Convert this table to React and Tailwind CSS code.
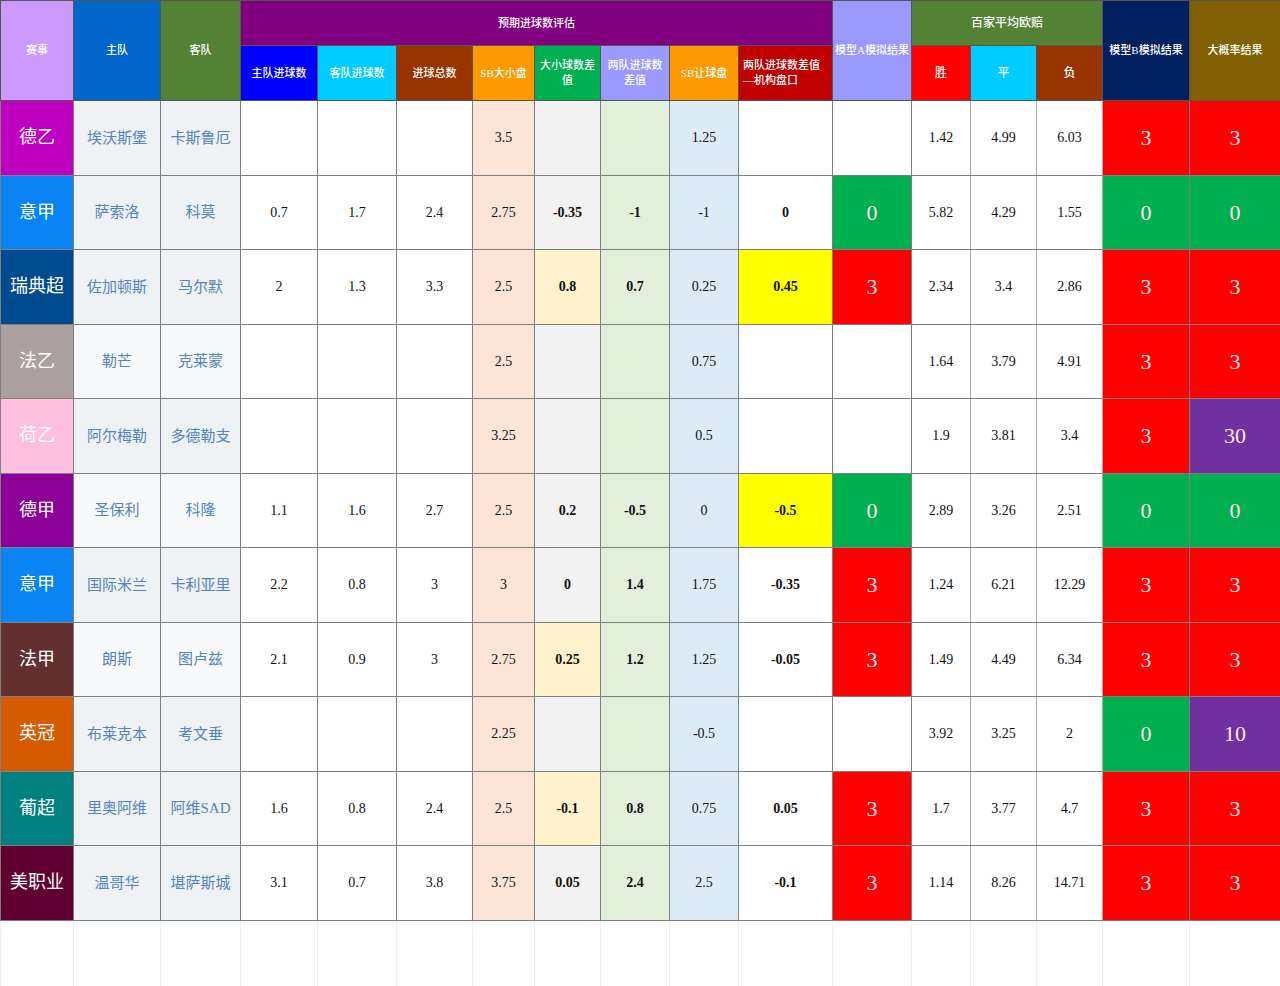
import React from 'react'

const COLS = [73, 87, 80, 77, 79, 76, 62, 66, 69, 69, 94, 79, 59, 66, 66, 87, 91]

const ROWS = [
  { lg: '德乙', lgBg: 'bg-[#c000c0]', home: '埃沃斯堡', away: '卡斯鲁厄', hg: '', ag: '', tot: '', ou: '3.5', ouD: '', gd: '', ah: '1.25', ahD: '', a: '', w: '1.42', d: '4.99', l: '6.03', b: '3', big: '3' },
  { lg: '意甲', lgBg: 'bg-[#0a84f5]', home: '萨索洛', away: '科莫', hg: '0.7', ag: '1.7', tot: '2.4', ou: '2.75', ouD: '-0.35', gd: '-1', ah: '-1', ahD: '0', a: '0', w: '5.82', d: '4.29', l: '1.55', b: '0', big: '0' },
  { lg: '瑞典超', lgBg: 'bg-[#004a8f]', home: '佐加顿斯', away: '马尔默', hg: '2', ag: '1.3', tot: '3.3', ou: '2.5', ouD: '0.8', ouY: true, gd: '0.7', ah: '0.25', ahD: '0.45', ahY: true, a: '3', w: '2.34', d: '3.4', l: '2.86', b: '3', big: '3' },
  { lg: '法乙', lgBg: 'bg-[#aaa09f]', light: true, home: '勒芒', away: '克莱蒙', hg: '', ag: '', tot: '', ou: '2.5', ouD: '', gd: '', ah: '0.75', ahD: '', a: '', w: '1.64', d: '3.79', l: '4.91', b: '3', big: '3' },
  { lg: '荷乙', lgBg: 'bg-[#ffbfdf]', home: '阿尔梅勒', away: '多德勒支', hg: '', ag: '', tot: '', ou: '3.25', ouD: '', gd: '', ah: '0.5', ahD: '', a: '', w: '1.9', d: '3.81', l: '3.4', b: '3', big: '30' },
  { lg: '德甲', lgBg: 'bg-[#8b0096]', light: true, home: '圣保利', away: '科隆', hg: '1.1', ag: '1.6', tot: '2.7', ou: '2.5', ouD: '0.2', gd: '-0.5', ah: '0', ahD: '-0.5', ahY: true, a: '0', w: '2.89', d: '3.26', l: '2.51', b: '0', big: '0' },
  { lg: '意甲', lgBg: 'bg-[#0a84f5]', home: '国际米兰', away: '卡利亚里', hg: '2.2', ag: '0.8', tot: '3', ou: '3', ouD: '0', gd: '1.4', ah: '1.75', ahD: '-0.35', a: '3', w: '1.24', d: '6.21', l: '12.29', b: '3', big: '3' },
  { lg: '法甲', lgBg: 'bg-[#632f2f]', light: true, home: '朗斯', away: '图卢兹', hg: '2.1', ag: '0.9', tot: '3', ou: '2.75', ouD: '0.25', ouY: true, gd: '1.2', ah: '1.25', ahD: '-0.05', a: '3', w: '1.49', d: '4.49', l: '6.34', b: '3', big: '3' },
  { lg: '英冠', lgBg: 'bg-[#d65a00]', home: '布莱克本', away: '考文垂', hg: '', ag: '', tot: '', ou: '2.25', ouD: '', gd: '', ah: '-0.5', ahD: '', a: '', w: '3.92', d: '3.25', l: '2', b: '0', big: '10' },
  { lg: '葡超', lgBg: 'bg-[#008080]', home: '里奥阿维', away: '阿维SAD', hg: '1.6', ag: '0.8', tot: '2.4', ou: '2.5', ouD: '-0.1', ouY: true, gd: '0.8', ah: '0.75', ahD: '0.05', a: '3', w: '1.7', d: '3.77', l: '4.7', b: '3', big: '3' },
  { lg: '美职业', lgBg: 'bg-[#600030]', home: '温哥华', away: '堪萨斯城', hg: '3.1', ag: '0.7', tot: '3.8', ou: '3.75', ouD: '0.05', gd: '2.4', ah: '2.5', ahD: '-0.1', a: '3', w: '1.14', d: '8.26', l: '14.71', b: '3', big: '3' },
]

function resultBg(v) {
  if (v === '3') return 'bg-[#ff0000]'
  if (v === '0') return 'bg-[#00b050]'
  if (v === '') return 'bg-white'
  return 'bg-[#7030a0]'
}

const th = 'border border-[#555] text-white font-medium text-[11px] leading-[15px] text-center align-middle px-0.5'
const td = 'border border-[#7f7f7f] text-center align-middle'
const num = `${td} text-[14px] text-[#111]`
const res = `${td} text-[22px] text-[#ffe8ee]`

export default function App() {
  return (
    <div className="w-[1280px] h-[986px] bg-white overflow-hidden" style={{ fontFamily: '"Liberation Serif", "Noto Sans CJK SC", serif' }}>
      <table className="table-fixed border-collapse w-[1280px]">
        <colgroup>
          {COLS.map((w, i) => <col key={i} style={{ width: w }} />)}
        </colgroup>
        <thead>
          <tr className="h-[45px]">
            <th rowSpan={2} className={`${th} bg-[#cc99ff]`}>赛事</th>
            <th rowSpan={2} className={`${th} bg-[#0066cc]`}>主队</th>
            <th rowSpan={2} className={`${th} bg-[#548235]`}>客队</th>
            <th colSpan={8} className={`${th} bg-[#800080]`}>预期进球数评估</th>
            <th rowSpan={2} className={`${th} bg-[#9999ff]`}>模型A模拟结果</th>
            <th colSpan={3} className={`${th} bg-[#548235] text-[12px]`}>百家平均欧赔</th>
            <th rowSpan={2} className={`${th} bg-[#002060]`}>模型B模拟结果</th>
            <th rowSpan={2} className={`${th} bg-[#806000]`}>大概率结果</th>
          </tr>
          <tr className="h-[55px]">
            <th className={`${th} bg-[#0000ff]`}>主队进球数</th>
            <th className={`${th} bg-[#00ccff]`}>客队进球数</th>
            <th className={`${th} bg-[#993300]`}>进球总数</th>
            <th className={`${th} bg-[#ff9900]`}>SB大小盘</th>
            <th className={`${th} bg-[#00b050]`}>大小球数差值</th>
            <th className={`${th} bg-[#9999ff]`}>两队进球数差值</th>
            <th className={`${th} bg-[#ff9900]`}>SB让球盘</th>
            <th className={`${th} bg-[#c00000] text-left pl-1`}>两队进球数差值—机构盘口</th>
            <th className={`${th} bg-[#ff0000] text-[12px]`}>胜</th>
            <th className={`${th} bg-[#00ccff] text-[12px]`}>平</th>
            <th className={`${th} bg-[#993300] text-[12px]`}>负</th>
          </tr>
        </thead>
        <tbody>
          {ROWS.map((r, i) => {
            const teamBg = r.light ? 'bg-[#f7f9fb]' : 'bg-[#eef2f5]'
            return (
              <tr key={i} className="h-[74.5px]">
                <td className={`${td} ${r.lgBg} text-[18px] text-white`}>{r.lg}</td>
                <td className={`${td} ${teamBg} text-[15px] text-[#5584c0]`}>{r.home}</td>
                <td className={`${td} ${teamBg} text-[15px] text-[#5584c0]`}>{r.away}</td>
                <td className={`${num} bg-white`}>{r.hg}</td>
                <td className={`${num} bg-white`}>{r.ag}</td>
                <td className={`${num} bg-white`}>{r.tot}</td>
                <td className={`${num} bg-[#fce4d6]`}>{r.ou}</td>
                <td className={`${num} ${r.ouY ? 'bg-[#fff2cc]' : 'bg-[#f2f2f2]'} font-bold`}>{r.ouD}</td>
                <td className={`${num} bg-[#e2efda] font-bold`}>{r.gd}</td>
                <td className={`${num} bg-[#ddebf7]`}>{r.ah}</td>
                <td className={`${num} ${r.ahY ? 'bg-[#ffff00]' : 'bg-white'} font-bold`}>{r.ahD}</td>
                <td className={`${res} ${resultBg(r.a)}`}>{r.a}</td>
                <td className={`${num} bg-white border-x-[#aaa]`}>{r.w}</td>
                <td className={`${num} bg-white border-x-[#aaa]`}>{r.d}</td>
                <td className={`${num} bg-white border-x-[#aaa]`}>{r.l}</td>
                <td className={`${res} ${resultBg(r.b)}`}>{r.b}</td>
                <td className={`${res} ${resultBg(r.big)}`}>{r.big}</td>
              </tr>
            )
          })}
          <tr className="h-[67px]">
            {COLS.map((_, i) => (
              <td key={i} className="border border-[#eeeeee] border-t-[#999] bg-white" />
            ))}
          </tr>
        </tbody>
      </table>
    </div>
  )
}
